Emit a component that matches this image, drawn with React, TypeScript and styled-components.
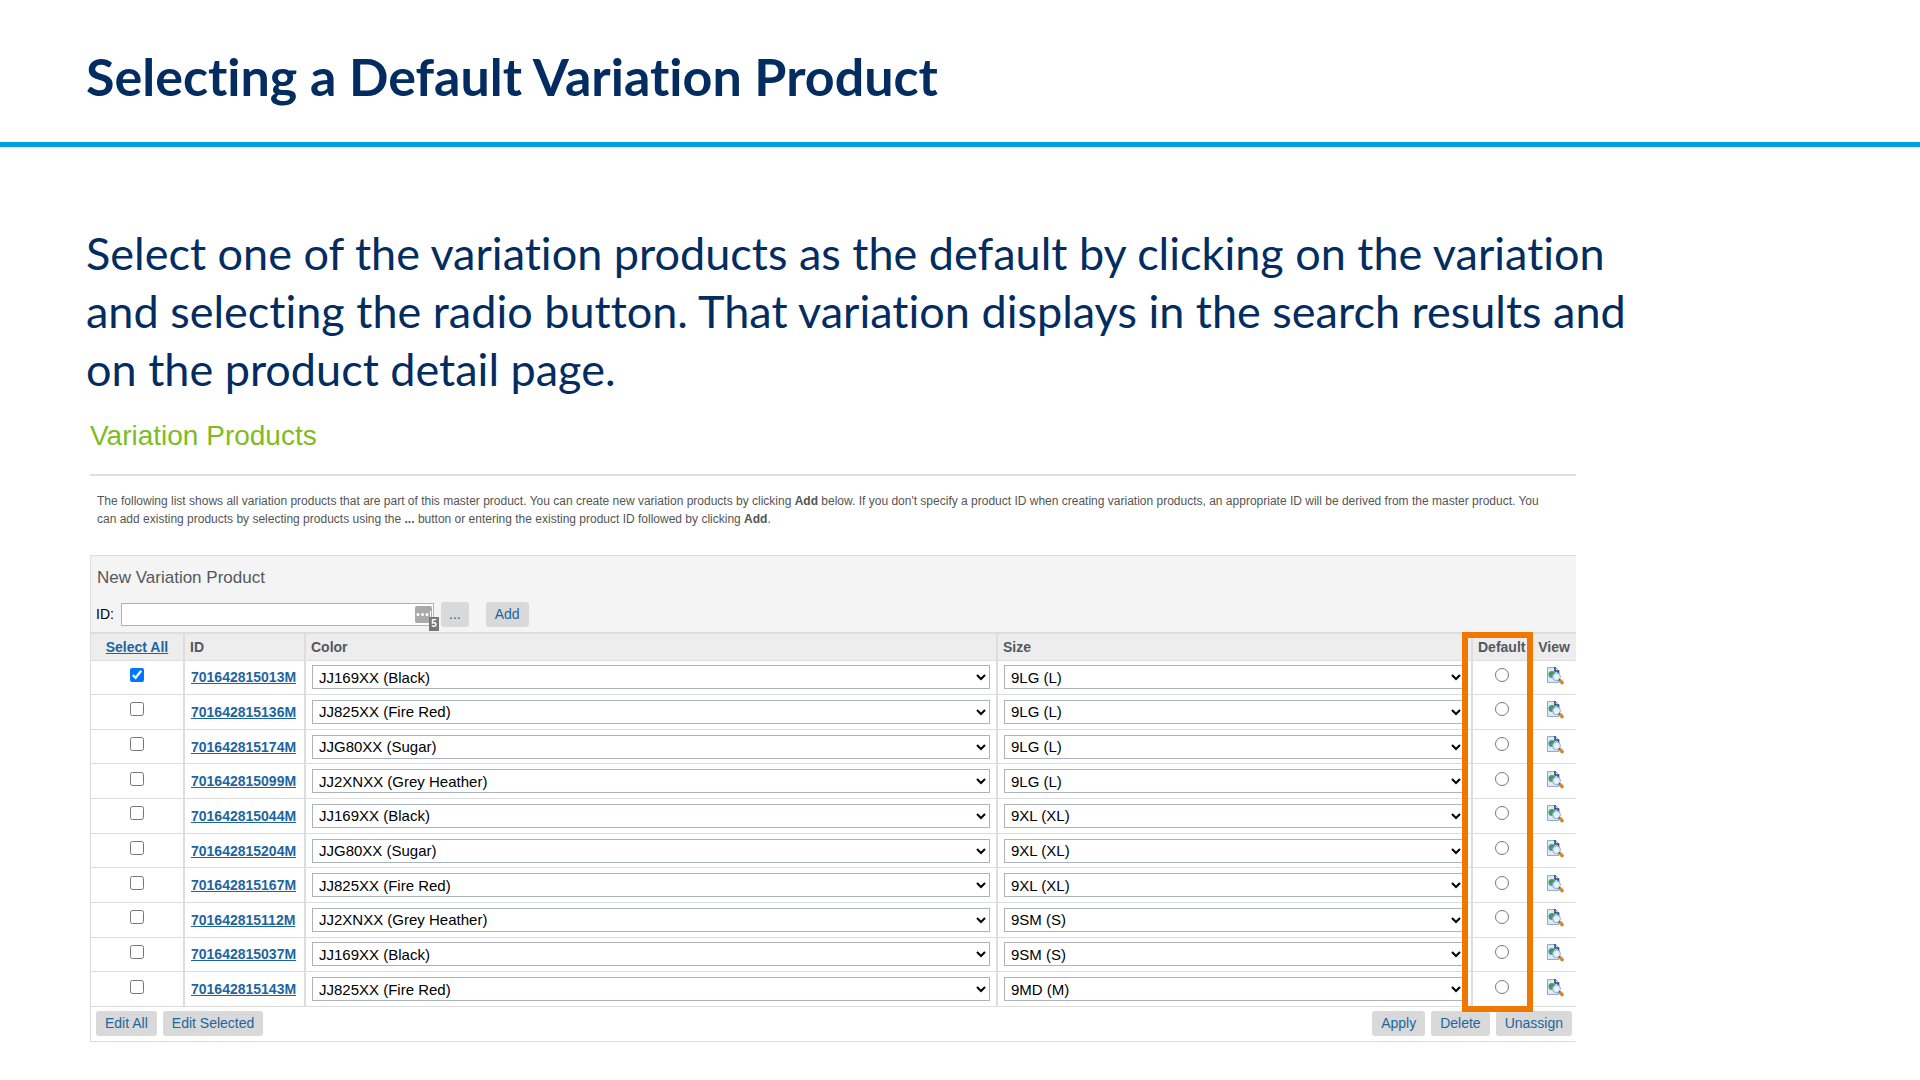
import React, { useState } from "react";
import styled, { createGlobalStyle } from "styled-components";

const GlobalStyle = createGlobalStyle`
  *, *::before, *::after { box-sizing: border-box; }
  body {
    margin: 0;
    background: #fff;
    font-family: "Liberation Sans", Arial, sans-serif;
  }
`;

const Header = styled.header`
  display: flex;
  align-items: center;
  height: 147px;
  padding: 10px 86px 0;
  border-bottom: 5px solid #00a1e0;
`;

const Title = styled.h1`
  margin: 0;
  color: #032d60;
  font: 700 52px/58px Lato, "Open Sans", sans-serif;
  font-variant-ligatures: none;
`;

const Content = styled.main`
  padding: 77px 86px 32px;
`;

const Lead = styled.p`
  max-width: 1560px;
  margin: 0;
  color: #032d60;
  font: 400 45px/58px Lato, "Open Sans", sans-serif;
  font-variant-ligatures: none;
`;

const Listing = styled.section`
  margin: 20px 258px 0 4px;
`;

const SectionTitle = styled.h2`
  margin: 0;
  padding-bottom: 20px;
  border-bottom: 2px solid #e0e0e0;
  color: #7ebc22;
  font-size: 28px;
  font-weight: 400;
  line-height: 36px;
`;

const Note = styled.p`
  margin: 0;
  padding: 16px 20px 27px 7px;
  color: #555;
  font-size: 12px;
  line-height: 18px;
`;

const Panel = styled.div`
  border: solid #dddddd;
  border-width: 1px 0 1px 1px;
`;

const NewProduct = styled.form`
  padding: 10px 5px 5px;
  background: #f4f4f4;
`;

const FormTitle = styled.h3`
  margin: 0 0 11px 1px;
  color: #54585c;
  font-size: 17px;
  font-weight: 400;
  line-height: 24px;
`;

const FormRow = styled.div`
  display: flex;
  align-items: center;
  height: 26px;
`;

const IdLabel = styled.label`
  width: 25px;
  font-size: 14px;
`;

const IdField = styled.div`
  position: relative;
  width: 313px;
  margin-right: 7px;
`;

const IdInput = styled.input`
  display: block;
  width: 100%;
  height: 23px;
  padding: 0 28px 0 6px;
  border: 1px solid #aab4be;
  background: #fff;
  font: 15px "Liberation Sans", Arial, sans-serif;
`;

const Autofill = styled.span`
  position: absolute;
  top: 3px;
  right: 2px;
  width: 17px;
  height: 17px;
  border-radius: 2px;
  background: #aaa;
  svg { display: block; }
`;

const Count = styled.span`
  position: absolute;
  top: 14px;
  right: -5px;
  width: 10px;
  height: 14px;
  background: #777;
  color: #fff;
  font-size: 10px;
  font-weight: 700;
  line-height: 14px;
  text-align: center;
`;

const Button = styled.button<{ $spaced?: boolean; $narrow?: boolean }>`
  height: 25px;
  margin: 0 0 0 ${(p) => (p.$spaced ? "17px" : "0")};
  padding: 0 ${(p) => (p.$narrow ? "8px" : "9px")};
  border: 0;
  border-radius: 3px;
  background: #d9d9d9;
  color: #1d659f;
  font: 14px/25px "Liberation Sans", Arial, sans-serif;
`;

const TableWrap = styled.div`
  position: relative;
`;

const Table = styled.table`
  width: 100%;
  height: 375px;
  border-collapse: collapse;
  table-layout: fixed;
`;

const Col = styled.col<{ $width?: string }>`
  width: ${(p) => p.$width ?? "auto"};
`;

const HeadCell = styled.th<{ $center?: boolean }>`
  height: 27px;
  padding: 0 5px;
  border: solid #dddddd;
  border-width: 2px 0 1px 2px;
  background: #ededed;
  color: #54585c;
  font-size: 14px;
  line-height: 16px;
  text-align: ${(p) => (p.$center ? "center" : "left")};
  white-space: nowrap;
  &:first-child { border-left: 0; }
  &:last-child { border-left: 0; }
`;

const Cell = styled.td`
  padding: 0 6px;
  border: solid #dddddd;
  border-width: 1px 0 1px 2px;
  &:first-child { border-left: 0; }
`;

const Link = styled.a`
  color: #1d659f;
  font-size: 14px;
  font-weight: 700;
`;

const Select = styled.select`
  display: block;
  width: 100%;
  height: 24px;
  padding: 0 2px;
  border: 1px solid #aab4be;
  border-radius: 0;
  background: #fff;
  color: #000;
  font: 15px "Liberation Sans", Arial, sans-serif;
`;

const Mark = styled.input`
  display: block;
  width: 14px;
  height: 14px;
  margin: 0 auto 5px;
`;

const Preview = styled.a`
  display: block;
  width: 18px;
  height: 20px;
  margin: 0 auto 3px;
  svg { display: block; }
`;

const Highlight = styled.div`
  position: absolute;
  top: 0;
  right: 43px;
  bottom: -5px;
  width: 71px;
  border: 6px solid #f07800;
  pointer-events: none;
`;

const Footer = styled.div`
  display: flex;
  justify-content: space-between;
  padding: 4px 4px 5px 5px;
`;

const Group = styled.div`
  display: flex;
  gap: 6px;
`;

const products = [
  ["701642815013M", "JJ169XX (Black)", "9LG (L)"],
  ["701642815136M", "JJ825XX (Fire Red)", "9LG (L)"],
  ["701642815174M", "JJG80XX (Sugar)", "9LG (L)"],
  ["701642815099M", "JJ2XNXX (Grey Heather)", "9LG (L)"],
  ["701642815044M", "JJ169XX (Black)", "9XL (XL)"],
  ["701642815204M", "JJG80XX (Sugar)", "9XL (XL)"],
  ["701642815167M", "JJ825XX (Fire Red)", "9XL (XL)"],
  ["701642815112M", "JJ2XNXX (Grey Heather)", "9SM (S)"],
  ["701642815037M", "JJ169XX (Black)", "9SM (S)"],
  ["701642815143M", "JJ825XX (Fire Red)", "9MD (M)"],
];

const PreviewIcon = () => (
  <svg width="18" height="20" viewBox="0 0 18 20" aria-hidden="true">
    <path d="M1.500 1.500h8l3 3v12h-11z" fill="#dfe9f6" stroke="#93a9cc" />
    <path d="M9 1v4h3.500v3" fill="none" stroke="#2a4a78" strokeWidth="1.600" />
    <circle cx="6" cy="8.500" r="3.600" fill="#4a90cf" />
    <path d="M3 8l2-2.500 2.500.5-.5 3-2.500 2z" fill="#43a047" />
    <circle cx="10.500" cy="10.800" r="3.900" fill="#e4f4fc" fillOpacity=".92" stroke="#8fa5ba" />
    <path d="M13 13.500l1.300 1.300" stroke="#444" strokeWidth="2" />
    <path d="M14.800 15.200l1.200 1.400" stroke="#d78a2c" strokeWidth="3.600" strokeLinecap="round" />
  </svg>
);

export default function App() {
  const [selected, setSelected] = useState<string[]>([products[0][0]]);
  const toggle = (id: string) =>
    setSelected((ids) => (ids.includes(id) ? ids.filter((x) => x !== id) : [...ids, id]));

  return (
    <>
      <GlobalStyle />
      <Header>
        <Title>Selecting a Default Variation Product</Title>
      </Header>
      <Content>
        <Lead>
          Select one of the variation products as the default by clicking on the variation and
          selecting the radio button. That variation displays in the search results and on the
          product detail page.
        </Lead>
        <Listing>
          <SectionTitle>Variation Products</SectionTitle>
          <Note>
            The following list shows all variation products that are part of this master product.
            You can create new variation products by clicking <b>Add</b> below. If you don't specify
            a product ID when creating variation products, an appropriate ID will be derived from
            the master product. You can add existing products by selecting products using the{" "}
            <b>...</b> button or entering the existing product ID followed by clicking <b>Add</b>.
          </Note>
          <Panel>
            <NewProduct onSubmit={(e) => e.preventDefault()}>
              <FormTitle>New Variation Product</FormTitle>
              <FormRow>
                <IdLabel htmlFor="product-id">ID:</IdLabel>
                <IdField>
                  <IdInput id="product-id" type="text" />
                  <Autofill>
                    <svg width="17" height="17" aria-hidden="true">
                      <g fill="#fff">
                        <circle cx="3" cy="8.500" r="1.500" />
                        <circle cx="7.500" cy="8.500" r="1.500" />
                        <circle cx="12" cy="8.500" r="1.500" />
                        <path d="M15 5h1v7h-1z" />
                      </g>
                    </svg>
                  </Autofill>
                  <Count>5</Count>
                </IdField>
                <Button type="button" $narrow>...</Button>
                <Button type="submit" $spaced>Add</Button>
              </FormRow>
            </NewProduct>
            <TableWrap>
              <Table>
                <colgroup>
                  <Col $width="93px" />
                  <Col $width="121px" />
                  <Col $width="46.6%" />
                  <Col />
                  <Col $width="60px" />
                  <Col $width="44px" />
                </colgroup>
                <thead>
                  <tr>
                    <HeadCell $center><Link href="#all">Select All</Link></HeadCell>
                    <HeadCell>ID</HeadCell>
                    <HeadCell>Color</HeadCell>
                    <HeadCell>Size</HeadCell>
                    <HeadCell>Default</HeadCell>
                    <HeadCell $center>View</HeadCell>
                  </tr>
                </thead>
                <tbody>
                  {products.map(([id, color, size]) => (
                    <tr key={id}>
                      <Cell>
                        <Mark
                          type="checkbox"
                          aria-label={`Select ${id}`}
                          checked={selected.includes(id)}
                          onChange={() => toggle(id)}
                        />
                      </Cell>
                      <Cell><Link href={`#${id}`}>{id}</Link></Cell>
                      <Cell>
                        <Select aria-label={`Color of ${id}`} defaultValue={color}>
                          <option>{color}</option>
                        </Select>
                      </Cell>
                      <Cell>
                        <Select aria-label={`Size of ${id}`} defaultValue={size}>
                          <option>{size}</option>
                        </Select>
                      </Cell>
                      <Cell>
                        <Mark type="radio" name="default" aria-label={`Make ${id} the default`} />
                      </Cell>
                      <Cell>
                        <Preview href={`#view-${id}`} aria-label={`View ${id}`}>
                          <PreviewIcon />
                        </Preview>
                      </Cell>
                    </tr>
                  ))}
                </tbody>
              </Table>
              <Highlight />
            </TableWrap>
            <Footer>
              <Group>
                <Button type="button">Edit All</Button>
                <Button type="button">Edit Selected</Button>
              </Group>
              <Group>
                <Button type="button">Apply</Button>
                <Button type="button">Delete</Button>
                <Button type="button">Unassign</Button>
              </Group>
            </Footer>
          </Panel>
        </Listing>
      </Content>
    </>
  );
}
